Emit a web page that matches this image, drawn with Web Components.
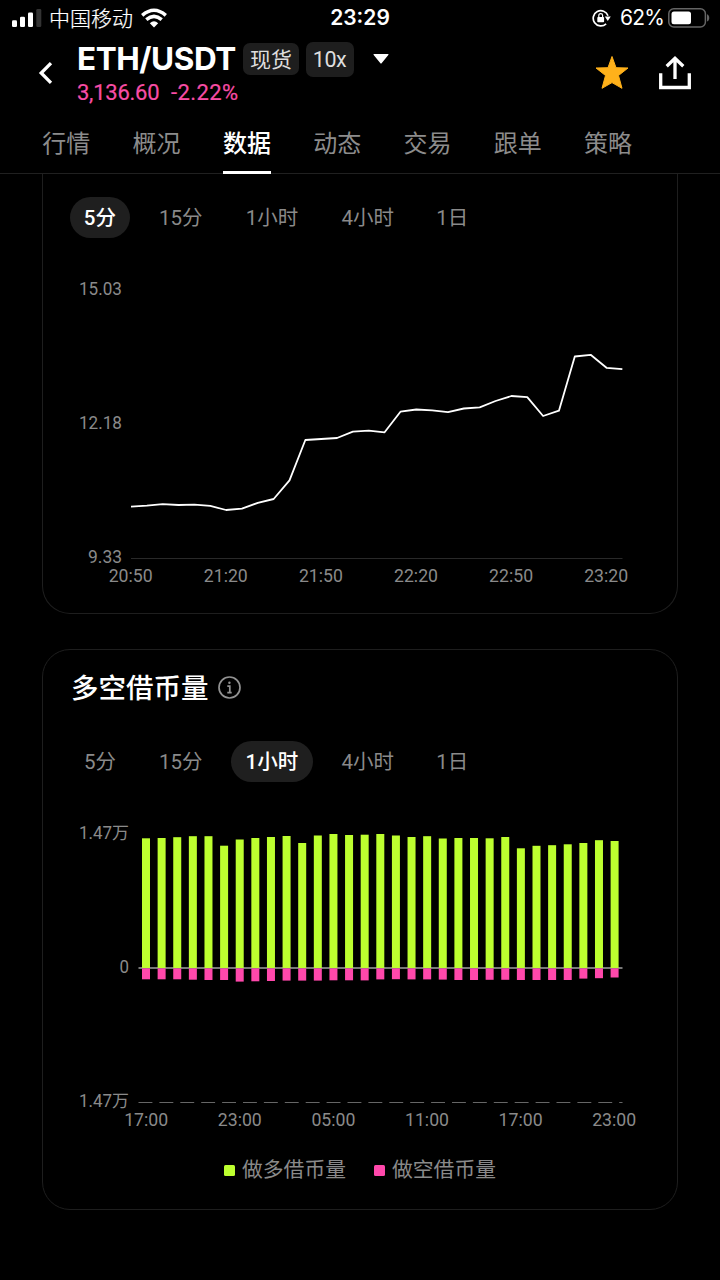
<!DOCTYPE html>
<html lang="zh-CN">
<head>
<meta charset="utf-8">
<title>ETH/USDT</title>
<style>
html,body{margin:0;padding:0;background:#000}
body{width:720px;height:1280px;overflow:hidden;color:#fff;font-family:Roboto,"Noto Sans CJK SC",sans-serif}
</style>
</head>
<body>
<market-page></market-page>
<script>
const define = (name, html, setup) => customElements.define(name, class extends HTMLElement {
  constructor() {
    super();
    this.attachShadow({ mode: 'open' });
  }
  connectedCallback() {
    const t = document.createElement('template');
    t.innerHTML = html;
    this.shadowRoot.replaceChildren(t.content.cloneNode(true));
    if (setup) setup(this, this.shadowRoot);
  }
});

define('status-bar', `
<style>
:host{display:grid;grid-template-columns:1fr auto 1fr;align-items:center;height:36px;padding:0 9px 0 12px;box-sizing:border-box}
div{display:flex;align-items:center;height:36px}
.right{justify-content:flex-end}
.carrier{font:300 21px/34px "Noto Sans CJK SC",sans-serif;margin:-2px 8px 0 7px;width:84px;white-space:nowrap;-webkit-text-stroke:.2px #fff}
.time{font:600 21px/36px Inter,sans-serif;letter-spacing:0;padding:0 3px 0 0}
.pct{font:400 21px/36px Inter,sans-serif;margin:0 5px 0 9px;letter-spacing:-.8px;width:43px;white-space:nowrap}
svg{display:block;flex:none}
</style>
<div>
 <svg width="30" height="20" viewBox="0 0 30 20"><g fill="#fff"><rect x="0" y="12.3" width="5" height="6.7" rx="1.3"/><rect x="8" y="8.7" width="5" height="10.3" rx="1.3"/><rect x="16" y="4.6" width="5" height="14.4" rx="1.3"/></g><rect x="24.3" y="1" width="5" height="18" rx="1.3" fill="#333"/></svg>
 <span class="carrier">中国移动</span>
 <svg width="26" height="20" viewBox="0 0 26 20" fill="none" stroke="#fff" stroke-width="3.5"><path d="M1.2 7.3Q13-2.8 24.8 7.3"/><path d="M5.3 11.6Q13 5.2 20.7 11.6"/><path d="M8.8 15.2Q13 11.5 17.2 15.2L13 19.4Z" fill="#fff" stroke="none"/></svg>
</div>
<span class="time">23:29</span>
<div class="right">
 <svg width="19" height="18" viewBox="0 0 19 18"><path d="M16 6.8A7.600 7.600 0 1 0 14.100 14.800" fill="none" stroke="#fff" stroke-width="1.700"/><path d="M12.8 7.600h6l-3 4.300z" fill="#fff"/><rect x="5.300" y="8" width="6.800" height="5.200" rx=".8" fill="#fff"/><path d="M6.800 8.500V6.500a1.900 1.900 0 0 1 3.800 0V8.500" fill="none" stroke="#fff" stroke-width="1.200"/></svg>
 <span class="pct">62%</span>
 <svg width="43" height="20" viewBox="0 0 43 20"><rect x=".8" y=".8" width="36.6" height="18.2" rx="5" fill="none" stroke="#656565" stroke-width="1.5"/><rect x="3.5" y="3.5" width="19.5" height="12.8" rx="2.5" fill="#fff"/><path d="M39 6.3c3 1 3 6.3 0 7.3z" fill="#656565"/></svg>
</div>`);

define('tag-chip', `
<style>
:host{display:flex;align-items:center;justify-content:center;background:#1e1e1e;border-radius:7px;color:#dedede;box-sizing:border-box;white-space:nowrap}
</style><slot></slot>`);

define('pair-header', `
<style>
:host{display:grid;grid-template-columns:39px 1fr auto;height:78px;padding:0 28.500px 0 38px;box-sizing:border-box}
.back{display:block;margin-top:25px}
.row{display:flex;align-items:center;height:46px}
h1{margin:0;width:166px;font:700 31.5px/46px Inter,sans-serif;letter-spacing:-.45px;white-space:nowrap}
.spot{width:56px;height:32px;font-size:21px;padding-bottom:2px}
.lev{width:48px;height:35px;font-size:21.5px;margin-left:6.500px;letter-spacing:-.5px}
.caret{margin-left:18.500px}
.price{color:#f84da6;font:400 22px/22px Roboto,sans-serif;display:flex;-webkit-text-stroke:.2px #f84da6}
.price span:first-child{width:94px;letter-spacing:-.25px}
.price span:last-child{letter-spacing:.4px}
.actions{display:flex;gap:28.500px;padding-top:19px}
svg{display:block}
</style>
<svg class="back" width="15" height="24" viewBox="0 0 15 24"><path d="M13 2.2 3.2 12 13 21.8" fill="none" stroke="#fff" stroke-width="3.3"/></svg>
<div>
 <div class="row"><h1>ETH/USDT</h1><tag-chip class="spot">现货</tag-chip><tag-chip class="lev">10x</tag-chip>
 <svg class="caret" width="18" height="12" viewBox="0 0 18 12"><path d="M2 1h14q1 0 .3 1l-6.500 8q-.8 1-1.600 0L1.700 2Q1 1 2 1z" fill="#fff"/></svg></div>
 <div class="price"><span>3,136.60</span><span>-2.22%</span></div>
</div>
<div class="actions">
 <svg width="34" height="36" viewBox="0 0 34 36"><path d="M17 1.500l4 11.200 12 .3-9.500 7.500 3.500 12.800L17 27.600 7 33.300l3.500-12.800L1 13l12-.3z" fill="#ffb11a" stroke="#ffb11a" stroke-linejoin="round"/></svg>
 <svg width="34" height="36" viewBox="0 0 34 36" fill="none" stroke="#fff" stroke-width="3.300"><path d="M2.700 18.300v14.200h28.600V18.300M17 24V4M8.700 11.300 17 3.200l8.300 8.100"/></svg>
</div>`);

define('nav-tabs', `
<style>
:host{display:flex;gap:42.300px;height:60px;padding-left:42.300px;border-bottom:1px solid #202020;box-sizing:border-box}
span{font-size:24px;line-height:60px;color:#8c8c8c;height:60px;width:48px;white-space:nowrap;box-sizing:border-box}
.on{color:#fff;font-weight:500;border-bottom:3px solid #fff}
</style>
<span>行情</span><span>概况</span><span class="on">数据</span><span>动态</span><span>交易</span><span>跟单</span><span>策略</span>`);

define('interval-tabs', `
<style>
:host{display:flex;gap:14.500px;height:41px}
span{display:flex;align-items:center;justify-content:center;height:41px;border-radius:21px;font-size:20.500px;line-height:39px;padding-top:2px;box-sizing:border-box;color:#8a8a8a;white-space:nowrap}
.on{background:#1f1f1f;color:#fff;font-weight:500}
</style>`, (el, root) => {
  const widths = [60.5, 72, 81.5, 81, 59];
  ['5分', '15分', '1小时', '4小时', '1日'].forEach((label, i) => {
    const s = document.createElement('span');
    s.textContent = label;
    s.style.width = widths[i] + 'px';
    if (label === el.getAttribute('active')) s.className = 'on';
    root.append(s);
  });
});

const label = (x, y, text, len, anchor = 'middle') =>
  `<text x="${x}" y="${y}" text-anchor="${anchor}" textLength="${len}" lengthAdjust="spacingAndGlyphs">${text}</text>`;
const chartStyle = `<style>:host{display:block}svg{display:block}text{font:400 17.500px Roboto,"Noto Sans CJK SC",sans-serif;fill:#8a8a8a}</style>`;

define('line-chart', chartStyle, (el, root) => {
  const ys = [506.7,505.7,504.2,505,504.7,505.8,510,508.7,502.8,499,480.3,440,439,438,431.7,430.7,432.3,411.7,409.5,410.3,412.2,408.5,407.3,401,396,397.2,416,410.7,356.5,354.8,367.8,369.2];
  const pts = ys.map((y, i) => `${(131 + i * 15.85).toFixed(2)},${y}`).join(' ');
  const times = ['20:50', '21:20', '21:50', '22:20', '22:50', '23:20'].map((t, i) => label(130.7 + i * 95.1, 582, t, 44)).join('');
  root.innerHTML += `<svg width="634" height="330" viewBox="43 270 634 330">
  ${label(122, 294.700, '15.03', 43, 'end')}${label(122, 429, '12.18', 43, 'end')}${label(122, 563, '9.33', 34, 'end')}
  <path d="M131 558.500H622.500" stroke="#292929"/>
  <polyline points="${pts}" fill="none" stroke="#fff" stroke-width="1.800" stroke-linejoin="round"/>${times}</svg>`;
});

define('bar-chart', chartStyle, (el, root) => {
  const top = [838.3,838,837.2,836.2,836.2,845.7,839.5,838,837,836,843,835.5,834,835,834.7,834,835.5,837,836.2,838.5,838,838,838.3,837,848.3,845.8,845.2,844.3,843,840.2,841];
  const low = [979.3,979.3,979.3,979.7,980,980,981.6,981.3,981,980.6,980.6,980.6,980.3,980.3,980.4,979.4,979.2,979.4,979.4,979.6,980,980,979.8,979.8,980,980,980,980,978.6,978.2,977.5];
  const bars = top.map((y, i) => {
    const x = (142 + i * 15.62).toFixed(2);
    return `<rect x="${x}" y="${y}" width="8" height="${968 - y}" fill="#bdff2f"/><rect x="${x}" y="968.400" width="8" height="${(low[i] - 968.4).toFixed(1)}" fill="#ff48ab"/>`;
  }).join('');
  const times = ['17:00', '23:00', '05:00', '11:00', '17:00', '23:00'].map((t, i) => label(146.2 + i * 93.6, 1125.5, t, 44)).join('');
  root.innerHTML += `<svg width="634" height="330" viewBox="43 810 634 330">
  ${label(129, 838.500, '1.47万', 50, 'end')}${label(129, 973, '0', 9.5, 'end')}${label(129, 1106.500, '1.47万', 50, 'end')}
  <path d="M138.500 968H622.500" stroke="#a0a0a0" stroke-width="1.500"/>${bars}
  <path d="M138.500 1102.500H622.500" stroke="#666" stroke-dasharray="13.900 7"/>${times}</svg>`;
});

define('data-card', `
<style>
:host{display:flex;flex-direction:column;border:1px solid #1e1e1e;border-radius:28px;box-sizing:border-box;width:636px;margin:0 auto}
</style><slot></slot>`);

define('card-title', `
<style>
:host{display:flex;align-items:center;height:40px;font-size:27.500px;font-weight:500;line-height:40px}
svg{margin:-4px 0 0 8px}
</style><slot></slot>
<svg width="25" height="25" viewBox="0 0 25 25" fill="none" stroke="#929292" stroke-width="1.700"><circle cx="12.500" cy="12.500" r="10.500"/><path d="M10.300 11.200h2.500v6.800M10.300 17.700h4.400"/><circle cx="12.400" cy="7.700" r="1.200" fill="#929292" stroke="none"/></svg>`);

define('chart-legend', `
<style>
:host{display:flex;justify-content:center;gap:28px;height:32px}
span{display:flex;align-items:center;gap:7px;font-size:20.800px;line-height:32px;color:#8a8a8a}
i{width:11px;height:11px;border-radius:1.500px;background:#bdff2f}
.short{background:#ff48ab}
</style>
<span><i></i>做多借币量</span><span><i class="short"></i>做空借币量</span>`);

define('market-page', `
<style>
:host{display:flex;flex-direction:column;width:720px;height:1280px;overflow:hidden;background:#000}
.first{height:440px;border-top:0;border-top-left-radius:0;border-top-right-radius:0}
.first interval-tabs{margin:23px 0 0 26.700px}
.first line-chart{margin-top:32px}
.second{height:561px;margin-top:35px}
card-title{margin:19px 0 0 28px}
.second interval-tabs{margin:32px 0 0 26.700px}
bar-chart{margin-top:28px}
chart-legend{margin-top:14px}
</style>
<status-bar></status-bar>
<pair-header></pair-header>
<nav-tabs></nav-tabs>
<data-card class="first"><interval-tabs active="5分"></interval-tabs><line-chart></line-chart></data-card>
<data-card class="second"><card-title>多空借币量</card-title><interval-tabs active="1小时"></interval-tabs><bar-chart></bar-chart><chart-legend></chart-legend></data-card>`);
</script>
</body>
</html>
